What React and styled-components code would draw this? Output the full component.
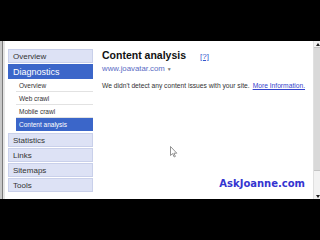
import React from "react";
import styled, { createGlobalStyle } from "styled-components";

const Global = createGlobalStyle`
  html, body { margin: 0; padding: 0; background: #000; }
  body { width: 320px; height: 240px; overflow: hidden; font-family: "Liberation Sans", Arial, sans-serif; }
`;

const Screen = styled.div`
  width: 320px;
  height: 240px;
  display: flex;
  flex-direction: column;
  background: #000;
`;

const Band = styled.div`
  height: ${(p) => p.h}px;
  background: #000;
  flex: none;
`;

const Window = styled.div`
  position: relative;
  height: 158px;
  display: flex;
  background: #fff;
`;

const Frame = styled.div`
  width: 5px;
  flex: none;
  background: linear-gradient(to right, #c8c8c8 0, #c8c8c8 2px, #7a7a7a 2px, #7a7a7a 3px, #e4e4e4 3px);
`;

const Sidebar = styled.nav`
  width: 85px;
  margin-left: 3px;
  padding-top: 8px;
  flex: none;
`;

const TopItem = styled.div`
  box-sizing: border-box;
  height: ${(p) => (p.active ? 15 : 14)}px;
  margin-bottom: ${(p) => (p.active ? 0 : 1)}px;
  padding-left: 4px;
  display: flex;
  align-items: center;
  font-size: ${(p) => (p.active ? 9 : 8)}px;
  color: ${(p) => (p.active ? "#fff" : "#333")};
  background: ${(p) => (p.active ? "#3b66c9" : "#dde2f5")};
  border: 1px solid ${(p) => (p.active ? "#3b66c9" : "#c9d0ea")};
`;

const SubList = styled.div`
  margin-left: 8px;
  margin-bottom: 2px;
`;

const SubItem = styled.div`
  box-sizing: border-box;
  height: 13px;
  padding-left: 3px;
  display: flex;
  align-items: center;
  font-size: 6.5px;
  color: ${(p) => (p.active ? "#fff" : "#333")};
  background: ${(p) => (p.active ? "#3b66c9" : "#fff")};
  border-bottom: 1px solid ${(p) => (p.active ? "#3b66c9" : "#e2e2e2")};
`;

const Main = styled.main`
  flex: 1;
  margin-left: 9px;
  padding: 8px 8px 10px 0;
  display: flex;
  flex-direction: column;
`;

const TitleRow = styled.div`
  display: flex;
  align-items: baseline;
  gap: 14px;
`;

const Title = styled.h1`
  margin: 0;
  font-size: 10.5px;
  font-weight: bold;
  color: #111;
`;

const Help = styled.a`
  font-size: 8px;
  color: #3355cc;
  text-decoration: underline;
`;

const Site = styled.div`
  margin-top: 3px;
  font-size: 7.8px;
  color: #5a6cc4;
  display: flex;
  align-items: center;
  gap: 2px;
`;

const Caret = styled.span`
  font-size: 5px;
  color: #777;
`;

const Message = styled.p`
  margin: 9px 0 0;
  font-size: 6.7px;
  color: #333;
  white-space: nowrap;
`;

const MoreLink = styled.a`
  margin-left: 3px;
  color: #3344cc;
  text-decoration: underline;
`;

const Brand = styled.div`
  margin-top: auto;
  align-self: flex-end;
  font-family: "DejaVu Sans", Verdana, sans-serif;
  font-weight: bold;
  font-size: 10px;
  color: #3434d0;
`;

const Scrollbar = styled.div`
  width: 7px;
  flex: none;
  display: flex;
  flex-direction: column;
  background: #f2f2f2;
  border-left: 1px solid #e0e0e0;
`;

const Arrow = styled.div`
  height: 6px;
  display: flex;
  align-items: center;
  justify-content: center;
  &::after {
    content: "";
    border-left: 2px solid transparent;
    border-right: 2px solid transparent;
    ${(p) => (p.down ? "border-top: 3px solid #222;" : "border-bottom: 3px solid #222;")}
  }
`;

const Thumb = styled.div`
  height: 122px;
  background: #d9d9d9;
  border-top: 1px solid #c4c4c4;
  border-bottom: 1px solid #c4c4c4;
`;

const Track = styled.div`
  flex: 1;
`;

const Cursor = styled.svg`
  position: absolute;
  left: 170px;
  top: 105px;
`;

const subs = ["Overview", "Web crawl", "Mobile crawl", "Content analysis"];
const after = ["Statistics", "Links", "Sitemaps", "Tools"];

export default function App() {
  return (
    <Screen>
      <Global />
      <Band h={41} />
      <Window>
        <Frame />
        <Sidebar>
          <TopItem>Overview</TopItem>
          <TopItem active>Diagnostics</TopItem>
          <SubList>
            {subs.map((s) => (
              <SubItem key={s} active={s === "Content analysis"}>
                {s}
              </SubItem>
            ))}
          </SubList>
          {after.map((s) => (
            <TopItem key={s}>{s}</TopItem>
          ))}
        </Sidebar>
        <Main>
          <TitleRow>
            <Title>Content analysis</Title>
            <Help>[?]</Help>
          </TitleRow>
          <Site>
            www.joavatar.com <Caret>▼</Caret>
          </Site>
          <Message>
            We didn't detect any content issues with your site.
            <MoreLink>More Information.</MoreLink>
          </Message>
          <Brand>AskJoanne.com</Brand>
        </Main>
        <Scrollbar>
          <Arrow />
          <Thumb />
          <Track />
          <Arrow down />
        </Scrollbar>
        <Cursor width="8" height="12" viewBox="0 0 8 12">
          <path d="M0.5 0.5 L0.5 9.5 L2.6 7.6 L4.2 11 L5.4 10.4 L3.9 7.2 L6.8 7.2 Z" fill="#fff" stroke="#777" strokeWidth="0.8" />
        </Cursor>
      </Window>
      <Band h={41} />
    </Screen>
  );
}
